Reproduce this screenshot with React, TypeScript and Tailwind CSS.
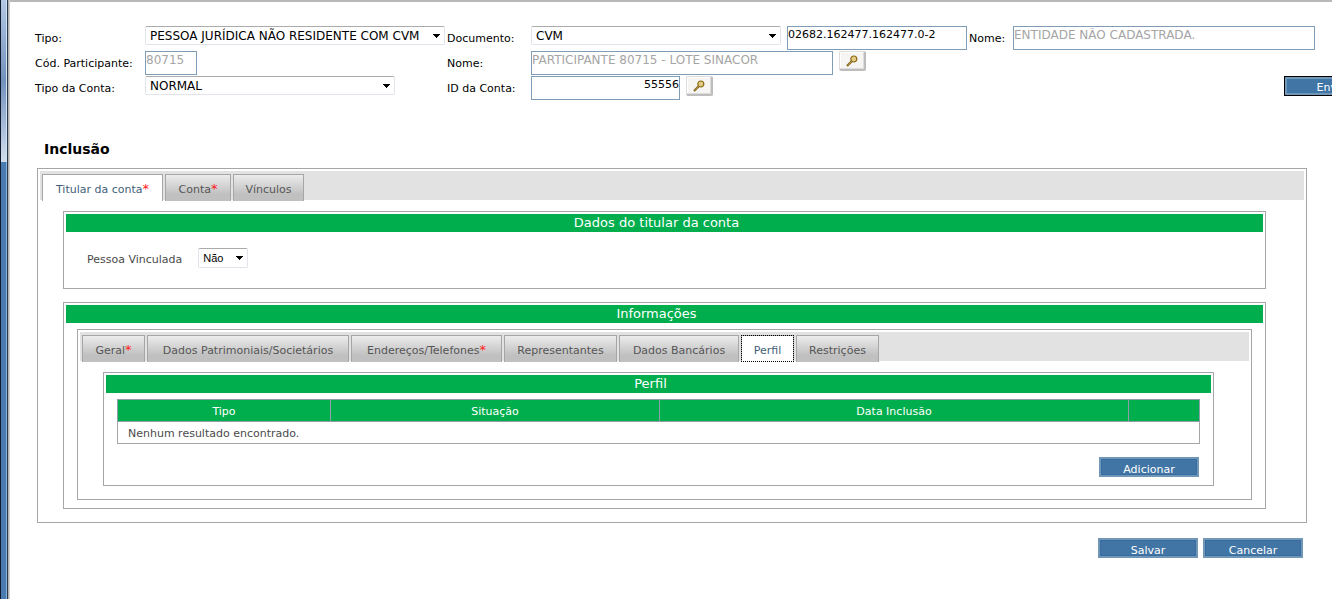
import { useState } from "react";
import type { ReactNode } from "react";

type Tab = { label: string; width: string; required?: boolean };

const MAIN_TABS: Tab[] = [
  { label: "Titular da conta", width: "w-[121px]", required: true },
  { label: "Conta", width: "w-[66px]", required: true },
  { label: "Vínculos", width: "w-[71px]" },
];

const INFO_TABS: Tab[] = [
  { label: "Geral", width: "w-[63px]", required: true },
  { label: "Dados Patrimoniais/Societários", width: "w-[202px]" },
  { label: "Endereços/Telefones", width: "w-[151px]", required: true },
  { label: "Representantes", width: "w-[113px]" },
  { label: "Dados Bancários", width: "w-[120px]" },
  { label: "Perfil", width: "w-[53px]" },
  { label: "Restrições", width: "w-[83px]" },
];

type SelectProps = {
  id: string;
  options: string[];
  className: string;
};

function Select({ id, options, className }: SelectProps) {
  return (
    <span className={`relative inline-flex ${className}`}>
      <select
        id={id}
        className="w-full appearance-none rounded-[2px] border border-[#e3e3eb] border-t-[#ababab] bg-white pl-1 text-black outline-none"
      >
        {options.map((option) => (
          <option key={option}>{option}</option>
        ))}
      </select>
      <svg
        aria-hidden
        viewBox="0 0 7 4"
        shapeRendering="crispEdges"
        className="pointer-events-none absolute top-2 right-[5px] h-1 w-[7px]"
      >
        <path d="M0 0h7v1h-1v1h-1v1h-1v1h-1v-1h-1v-1h-1v-1h-1z" fill="#000" />
      </svg>
    </span>
  );
}

type FieldProps = {
  id: string;
  value: string;
  className: string;
  disabled?: boolean;
};

function Field({ id, value, className, disabled }: FieldProps) {
  return (
    <input
      id={id}
      type="text"
      defaultValue={value}
      disabled={disabled}
      className={`h-6 border border-[#7f9db9] bg-white pb-[7px] text-black outline-none disabled:text-[12px] disabled:leading-4 disabled:text-[#a5a5a5] ${className}`}
    />
  );
}

function SearchButton({ label }: { label: string }) {
  return (
    <button
      type="button"
      aria-label={label}
      className="ml-1.5 flex h-5 w-[27px] items-center justify-center rounded-[2px] border-2 border-t border-l border-[#bdbdbd] border-t-[#dcdcdc] border-l-[#dcdcdc] bg-[#f6f5f4] shadow-[inset_-1px_-1px_0_#dcdcdc,inset_1px_1px_0_#ffffff]"
    >
      <svg viewBox="0 0 12 12" className="size-3" aria-hidden>
        <path d="M1 11 5.5 6.5" stroke="#7d5f10" strokeWidth="2.2" />
        <path d="M1.6 10.4 5.5 6.5" stroke="#d9b95c" strokeWidth="0.6" />
        <circle cx="7.8" cy="4" r="3" fill="#e4cc88" stroke="#8a6a14" strokeWidth="1.2" />
      </svg>
    </button>
  );
}

function ActionButton({ children, focused }: { children: ReactNode; focused?: boolean }) {
  return (
    <button
      type="button"
      className={
        focused
          ? "h-5 w-[100px] shrink-0 border border-black bg-[#4175a5] pt-[3px] leading-4 text-white shadow-[inset_0_0_0_2px_#7096b8]"
          : "h-5 w-[100px] shrink-0 border-2 border-[#7096b8] bg-[#4175a5] pt-[3px] leading-4 text-white shadow-[inset_0_0_0_1px_#3b6c9e]"
      }
    >
      {children}
    </button>
  );
}

type TabStripProps = {
  tabs: Tab[];
  initial: number;
  dotted?: boolean;
};

function TabStrip({ tabs, initial, dotted }: TabStripProps) {
  const [active, setActive] = useState(initial);

  return (
    <div role="tablist" className="flex h-[29px] gap-0.5 bg-[#e2e2e2] pt-[3px] pl-0.5">
      {tabs.map((tab, i) => {
        const selected = i === active;
        let look = "bg-linear-to-b from-[#ececec] to-[#c0c0c0] to-75% text-[#555]";
        if (selected) {
          look = dotted
            ? "bg-white text-[#3f5f7a] outline-1 -outline-offset-1 outline-dotted outline-black"
            : "bg-white text-[#3f5f7a]";
        }
        return (
          <button
            key={tab.label}
            type="button"
            role="tab"
            aria-selected={selected}
            onClick={() => setActive(i)}
            className={`h-[27px] border border-b-0 border-[#a6a6a6] pt-1 whitespace-nowrap ${tab.width} ${look}`}
          >
            {tab.label}
            {tab.required && <span className="text-[13px] leading-3 text-[#ff1a1a]">*</span>}
          </button>
        );
      })}
    </div>
  );
}

type PanelProps = {
  title: string;
  className?: string;
  children: ReactNode;
};

function Panel({ title, className = "", children }: PanelProps) {
  return (
    <section className={`border border-[#a6a6a6] p-0.5 ${className}`}>
      <h2 className="h-[18px] bg-[#00ae4d] pr-4 text-center text-[13px] leading-[18px] text-white">
        {title}
      </h2>
      {children}
    </section>
  );
}

function AccountHeader() {
  return (
    <div className="grid auto-rows-[25px] grid-cols-[110px_302px_84px_438px_44px_302px] text-black">
      <label htmlFor="tipo" className="pt-[5px]">Tipo:</label>
      <Select
        id="tipo"
        options={["PESSOA JURÍDICA NÃO RESIDENTE COM CVM"]}
        className="h-[19px] w-[300px] text-[12px]"
      />
      <label htmlFor="documento" className="pt-[5px]">Documento:</label>
      <div className="flex items-start gap-1.5">
        <Select id="documento" options={["CVM"]} className="h-[19px] w-[250px] text-[12px]" />
        <Field id="numero" value="02682.162477.162477.0-2" className="w-[180px]" />
      </div>
      <label htmlFor="nome" className="pt-[5px]">Nome:</label>
      <Field id="nome" value="ENTIDADE NÃO CADASTRADA." className="w-[302px]" disabled />

      <label htmlFor="codigo" className="pt-[5px]">Cód. Participante:</label>
      <Field id="codigo" value="80715" className="w-[52px]" disabled />
      <label htmlFor="participante" className="pt-[5px]">Nome:</label>
      <div className="col-span-3 flex items-start">
        <Field
          id="participante"
          value="PARTICIPANTE 80715 - LOTE SINACOR"
          className="w-[302px]"
          disabled
        />
        <SearchButton label="Pesquisar participante" />
      </div>

      <label htmlFor="tipo-conta" className="pt-[5px]">Tipo da Conta:</label>
      <Select id="tipo-conta" options={["NORMAL"]} className="h-[19px] w-[250px] text-[12px]" />
      <label htmlFor="id-conta" className="pt-[5px]">ID da Conta:</label>
      <div className="flex items-start">
        <Field id="id-conta" value="55556" className="w-[149px] text-right" />
        <SearchButton label="Pesquisar conta" />
      </div>
      <div className="col-span-2 flex w-[415px] items-start justify-end">
        <ActionButton focused>Enviar</ActionButton>
      </div>
    </div>
  );
}

function ProfileTable() {
  return (
    <table className="w-full table-fixed border-collapse border border-[#a6a6a6]">
      <colgroup>
        <col className="w-[213px]" />
        <col className="w-[329px]" />
        <col />
        <col className="w-[71px]" />
      </colgroup>
      <thead>
        <tr className="h-[22px] bg-[#00ae4d] text-white">
          <th className="border border-[#8f9fa8] pt-0.5 font-normal">Tipo</th>
          <th className="border border-[#8f9fa8] pt-0.5 font-normal">Situação</th>
          <th className="border border-[#8f9fa8] pt-0.5 font-normal">Data Inclusão</th>
          <td className="border border-[#8f9fa8]" />
        </tr>
      </thead>
      <tbody>
        <tr className="h-[22px]">
          <td colSpan={4} className="pt-0.5 pl-2.5">Nenhum resultado encontrado.</td>
        </tr>
      </tbody>
    </table>
  );
}

export default function App() {
  return (
    <div className="flex min-h-screen overflow-hidden bg-white font-['DejaVu_Sans',Verdana,sans-serif] text-[11px] leading-4 text-[#4a4a4a]">
      <div className="flex w-2.5 shrink-0 border-r border-l border-r-[#d0d0d0] border-l-[#111a2b]">
        <div className="flex flex-1 border-r border-[#b0b0b0]">
          <div className="flex flex-1 flex-col border-r border-[#26384d]">
            <div className="h-[162px] border-r border-[#d5e2f2] bg-linear-to-b from-[#b4c8e4] via-[#7391bd] via-50% to-[#d3dfef]" />
            <div className="flex-1 border-r border-[#8fb4dc] bg-[#4a7bb0]" />
          </div>
        </div>
      </div>

      <main className="min-w-0 flex-1 border-t-2 border-[#b8b8b8] px-[25px] pt-6">
        <AccountHeader />

        <h1 className="mt-10 ml-[9px] text-sm leading-4 font-bold text-black">Inclusão</h1>

        <div className="mt-[11px] ml-0.5 border border-[#a6a6a6] p-0.5 pb-[13px]">
          <TabStrip tabs={MAIN_TABS} initial={0} />

          <div className="mt-[11px] mr-[38px] ml-[23px] flex flex-col gap-[13px]">
            <Panel title="Dados do titular da conta">
              <div className="flex items-start gap-4 px-[21px] pt-4 pb-[18px]">
                <label htmlFor="vinculada" className="pt-1">Pessoa Vinculada</label>
                <Select
                  id="vinculada"
                  options={["Não", "Sim"]}
                  className="h-5 w-[50px] font-['Liberation_Sans',Arial,sans-serif]"
                />
              </div>
            </Panel>

            <Panel title="Informações">
              <div className="mx-[11px] my-1.5 border border-[#a6a6a6] p-0.5 pb-[13px]">
                <TabStrip tabs={INFO_TABS} initial={5} dotted />

                <Panel title="Perfil" className="mt-[11px] mr-[35px] ml-[23px]">
                  <div className="px-[11px] py-1.5">
                    <ProfileTable />
                    <div className="mt-[13px] flex justify-end pr-px">
                      <ActionButton>Adicionar</ActionButton>
                    </div>
                  </div>
                </Panel>
              </div>
            </Panel>
          </div>
        </div>

        <div className="mt-[15px] mr-1 flex justify-end gap-[5px]">
          <ActionButton>Salvar</ActionButton>
          <ActionButton>Cancelar</ActionButton>
        </div>
      </main>
    </div>
  );
}
